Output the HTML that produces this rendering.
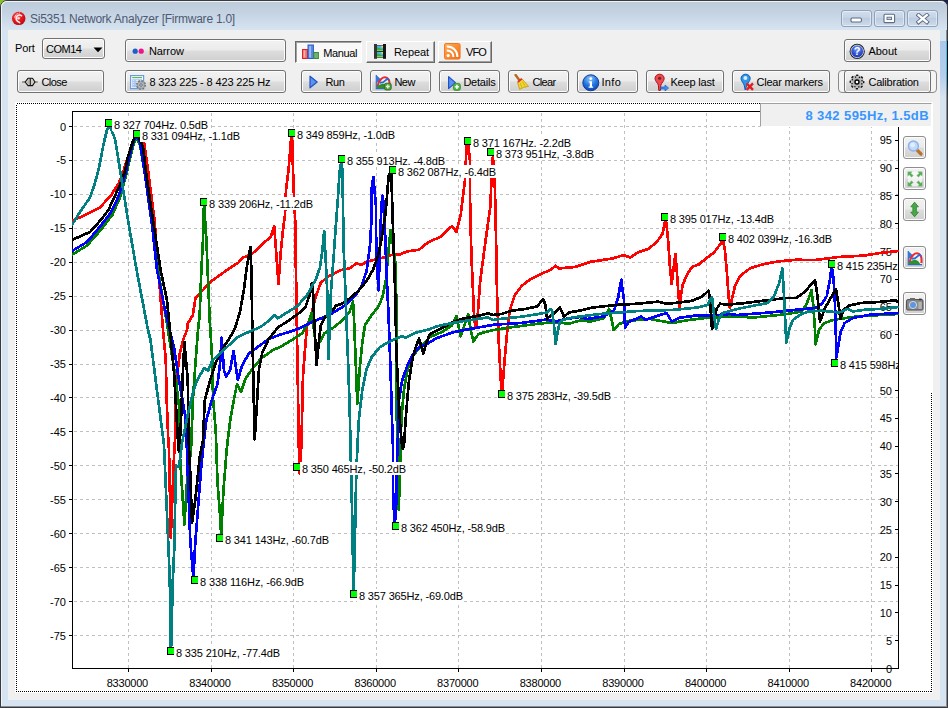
<!DOCTYPE html><html><head><meta charset="utf-8"><title>Si5351 Network Analyzer</title><style>
html,body{margin:0;padding:0}
body{width:948px;height:708px;overflow:hidden;position:relative;background:#2e2e2e;font-family:"Liberation Sans",sans-serif;font-size:11px;color:#000}
.abs{position:absolute}
#frame{left:0;top:0;width:946px;height:706px;border:1px solid #3a3a3a;border-radius:7px 7px 1px 1px;background:#d6e3f1;overflow:hidden;box-shadow:inset -1px -1px 0 #8a8d92}
#frame .hl{left:0;top:0;width:943px;height:703px;border:1px solid #eef4fb;border-right-color:transparent;border-bottom-color:transparent;border-radius:6px 6px 0 0}
#tbar{left:0;top:0;width:946px;height:29px;background:linear-gradient(#bccbdb 0,#c4d2e1 40%,#d7e4f2 100%)}
#title{left:30px;top:12px;font-size:12px;line-height:14px;color:#4e5a73;white-space:nowrap;letter-spacing:-0.24px}
#client{left:8px;top:30px;width:932px;height:670px;background:#f0f0f0}
.cap{top:10px;height:15px;width:29px;border:1px solid #8fa2bd;border-radius:3px;background:linear-gradient(#d3deec,#c3d2e4 50%,#bccbe0 50%,#cfdbea);box-shadow:inset 0 0 0 1px rgba(255,255,255,.45)}
.btn{box-sizing:border-box;height:23px;border:1px solid #707070;border-radius:3px;background:linear-gradient(#f2f2f2 0,#ebebeb 48%,#dddddd 52%,#cfcfcf 100%);box-shadow:inset 0 0 0 1px #fcfcfc;white-space:nowrap}
.btn span,.tb span{position:absolute;top:5px;line-height:13px}
.tb{box-sizing:border-box;height:22px;white-space:nowrap}
.tb.up{border:1px solid;border-color:#fff #696969 #696969 #fff;box-shadow:inset -1px -1px 0 #a0a0a0;background:#f0f0f0}
.tb.down{border:1px solid;border-color:#696969 #fff #fff #696969;box-shadow:inset 1px 1px 0 #a0a0a0;background:#f8f8f8}
#panel{left:15px;top:102px;width:918px;height:591px;background:#fff}
.chart{position:absolute;left:0;top:0}
#info{left:760px;top:103px;width:170px;height:22px;border:1px solid;border-color:#a0a0a0 #fff #fff #a0a0a0;background:#f0f0f0}
#info span{position:absolute;right:2px;top:4px;font-weight:bold;font-size:13px;line-height:15px;color:#3796ff;white-space:nowrap;letter-spacing:.4px}
.sb{box-sizing:border-box;left:903px;width:23px;height:23px;border:1px solid #8e8e8e;border-radius:3px;background:linear-gradient(#f2f2f2 0,#ebebeb 48%,#dddddd 52%,#cfcfcf 100%);box-shadow:inset 0 0 0 1px #fcfcfc}
</style></head><body>
<div class="abs" style="left:0;top:0;width:8px;height:8px;background:#86c425"></div><div class="abs" style="left:940px;top:0;width:8px;height:8px;background:#1c2048"></div>
<div id="frame" class="abs"><div id="tbar" class="abs"></div><div class="hl abs"></div></div>
<div id="title" class="abs">Si5351 Network Analyzer [Firmware 1.0]</div>
<svg class="abs" style="left:10px;top:10px" width="18" height="18" viewBox="0 0 18 18"><defs><radialGradient id="ri" cx="40%" cy="35%" r="70%"><stop offset="0" stop-color="#ff6a6a"/><stop offset=".5" stop-color="#e8181c"/><stop offset="1" stop-color="#b00c10"/></radialGradient></defs><circle cx="8.7" cy="8.4" r="7.2" fill="#c8ccd4" opacity=".7"/><circle cx="8.7" cy="8.4" r="6.7" fill="url(#ri)"/><path d="M9.6 12.6C6.4 11.4 5.2 8.6 6.8 6.4 8 4.8 10.4 4.6 11.6 5.8" fill="none" stroke="#fff" stroke-width="1.6" stroke-linecap="round" opacity=".9"/><path d="M4.6 7.6L5.6 5.2M6.4 4.4L7.6 3.2M8.8 3.2L9.8 2.8" stroke="#fff" stroke-width="1" opacity=".85"/><circle cx="8.6" cy="8.2" r="1.3" fill="#fff" opacity=".85"/></svg>
<div class="cap abs" style="left:841px"><svg class="abs" style="left:8px;top:6px" width="13" height="7"><rect x="1" y="1" width="10.4" height="4" rx="1.2" fill="#fff" stroke="#5d6c86" stroke-width="1.1"/></svg></div>
<div class="cap abs" style="left:874px"><svg class="abs" style="left:8px;top:2px" width="14" height="12"><rect x="1" y="1.2" width="10.6" height="8.4" rx="1.2" fill="#fff" stroke="#5d6c86" stroke-width="1.1"/><rect x="4" y="4.2" width="4.6" height="2.4" fill="#c8d4e6" stroke="#5d6c86" stroke-width=".9"/></svg></div>
<div class="cap abs" style="left:907px"><svg class="abs" style="left:8px;top:2px" width="14" height="12"><path d="M2.6 2.2L10.8 9M10.8 2.2L2.6 9" stroke="#5d6c86" stroke-width="4.2" stroke-linecap="square"/><path d="M2.6 2.2L10.8 9M10.8 2.2L2.6 9" stroke="#fff" stroke-width="2.3" stroke-linecap="square"/></svg></div>
<div class="abs" style="left:940px;top:41px;width:6px;height:56px;background:linear-gradient(#aac7ea,#b4cdec 60%,#d6e3f1)"></div><div class="abs" style="left:946px;top:41px;width:2px;height:56px;background:linear-gradient(90deg,#30c0e8 0,#30c0e8 40%,#000 50%);-webkit-mask-image:linear-gradient(#000 50%,transparent)"></div>
<div id="client" class="abs"></div>
<div class="abs" style="left:15px;top:42px;line-height:13px;letter-spacing:-0.1px">Port</div>
<div class="btn abs" style="left:42px;top:38px;width:63px;height:21px"><span style="left:3px;top:4px;letter-spacing:-0.48px">COM14</span><svg class="abs" style="left:50px;top:8px" width="10" height="6"><path d="M.5 .5H9.5L5 5.2Z" fill="#000"/></svg></div>
<div class="btn abs" style="left:125px;top:39px;width:161px"><svg class="abs" style="left:5px;top:7px" width="16" height="8"><circle cx="4.2" cy="4.2" r="2.6" fill="#1c5fc8"/><circle cx="10.2" cy="4.2" r="2.6" fill="#f0148c"/></svg><span style="left:23px;letter-spacing:-0.12px">Narrow</span></div>
<div class="tb down abs" style="left:295px;top:41px;width:67px"><svg class="abs" style="left:6px;top:2px" width="17" height="16"><rect x=".5" y="5.5" width="5" height="9" fill="#f26d6d" stroke="#d22"/><rect x="6" y="1" width="5.4" height="13.5" fill="#5a8be6" stroke="#2a5cc8"/><rect x="11.8" y="8.5" width="4.6" height="6" fill="#6fb36f" stroke="#3a8a3a"/><rect x="1.6" y="6.5" width="1.6" height="7" fill="#ffb0b0"/><rect x="7.2" y="2" width="1.8" height="11.5" fill="#9dbcf5"/></svg><span style="left:27.2px;top:5px;letter-spacing:-0.35px">Manual</span></div>
<div class="tb up abs" style="left:366px;top:41px;width:69px"><svg class="abs" style="left:7px;top:2px" width="13" height="16"><rect x="0" y="0" width="3" height="14.8" fill="#353535"/><rect x="9" y="0" width="3" height="14.8" fill="#151515"/><rect x="3" y="1.2" width="6" height="12.6" fill="#3a332c"/><rect x="3" y="1.9" width="6" height="5.1" fill="#4ab0f0"/><path d="M3 3.2L9 5.6V7H3Z" fill="#30b038"/><rect x="3" y="5.9" width="6" height="1.1" fill="#70dc48"/><rect x="7.4" y="1.9" width="1.6" height="1.7" fill="#f4dc50"/><rect x="3" y="8" width="6" height="5.1" fill="#4ab0f0"/><path d="M3 9.3L9 11.7V13.1H3Z" fill="#30b038"/><rect x="3" y="12" width="6" height="1.1" fill="#70dc48"/><rect x="7.4" y="8" width="1.6" height="1.7" fill="#f4dc50"/></svg><span style="left:27px;top:4px;letter-spacing:-0.08px">Repeat</span></div>
<div class="tb up abs" style="left:438px;top:41px;width:54px"><svg class="abs" style="left:5px;top:1px" width="17" height="17"><defs><linearGradient id="rs" x1="0" y1="0" x2="1" y2="1"><stop offset="0" stop-color="#ffb05c"/><stop offset="1" stop-color="#f26a10"/></linearGradient></defs><rect x=".5" y=".5" width="15.6" height="15.6" rx="1.5" fill="url(#rs)" stroke="#f47a20"/><circle cx="4.2" cy="12.6" r="1.6" fill="#fff"/><path d="M2.8 7.4A6.2 6.2 0 0 1 9.4 14" fill="none" stroke="#fff" stroke-width="2"/><path d="M2.8 3.4A10.2 10.2 0 0 1 13.4 14" fill="none" stroke="#fff" stroke-width="2"/></svg><span style="left:27px;top:4px;letter-spacing:-0.95px">VFO</span></div>
<div class="btn abs" style="left:844px;top:39px;width:87px"><svg class="abs" style="left:4px;top:3px" width="17" height="17"><defs><radialGradient id="qb" cx="50%" cy="30%" r="75%"><stop offset="0" stop-color="#7f9ff0"/><stop offset=".6" stop-color="#2a50d0"/><stop offset="1" stop-color="#1834a0"/></radialGradient></defs><circle cx="8.2" cy="8.4" r="7.6" fill="#1a1a1a"/><circle cx="8.2" cy="8.4" r="6.3" fill="url(#qb)" stroke="#dfe6f8" stroke-width=".8"/><text x="8.2" y="12.4" text-anchor="middle" font-family="'Liberation Sans',sans-serif" font-weight="bold" font-size="11px" fill="#fff">?</text></svg><span style="left:23.4px">About</span></div>
<div class="btn abs" style="left:17px;top:70px;width:87px"><svg class="abs" style="left:4px;top:6px" width="18" height="10"><path d="M0 5H3.4M12.8 5H15.8" stroke="#85857c" stroke-width="1.4"/><path d="M3.1 5L6 1.3H10.5L13 5 10.5 8.6H6Z" fill="#d2cec6" stroke="#111" stroke-width="1.1" stroke-linejoin="round"/><path d="M5 5L6.6 2.6H7.4V7.6H6.6Z" fill="#b8b4ac"/><path d="M8.3 1.3V8.6" stroke="#1a1a1a" stroke-width="1.1"/></svg><span style="left:23.4px;letter-spacing:-0.54px">Close</span></div>
<div class="btn abs" style="left:125px;top:70px;width:161px"><svg class="abs" style="left:4px;top:4px" width="18" height="16"><rect x=".6" y=".6" width="13" height="13" fill="#fff" stroke="#6a9be0" stroke-width="1.2"/><rect x="2.2" y="2" width="9.8" height="1.2" fill="#5cb85c"/><rect x="2.2" y="4.2" width="9.8" height="8.2" fill="#a8c4ee"/><path d="M3.2 5.6H11M3.2 7.6H11M3.2 9.6H8" stroke="#e8f0fc" stroke-width="1" stroke-dasharray="1 1.6 3 1.6"/><circle cx="11" cy="10" r="4.3" fill="#a4a4a4"/><circle cx="11" cy="10" r="4.3" fill="none" stroke="#6e6e6e" stroke-width="1.3" stroke-dasharray="1.7 1.68"/><circle cx="11" cy="10" r="2.6" fill="#bdbdbd"/><circle cx="11" cy="10" r="1.4" fill="#8ec0f4" stroke="#666" stroke-width=".7"/></svg><span style="left:23.4px;letter-spacing:-0.13px">8 323 225 - 8 423 225 Hz</span></div>
<div class="btn abs" style="left:301px;top:70px;width:61px"><svg class="abs" style="left:7px;top:4px" width="10" height="14"><path d="M1 1.2L8.2 7 1 12.8Z" fill="#5b93ee" stroke="#1f52c8" stroke-width="1.2" stroke-linejoin="round"/></svg><span style="left:23.4px;letter-spacing:-0.40px">Run</span></div>
<div class="btn abs" style="left:370px;top:70px;width:61px"><svg class="abs" style="left:4px;top:3px" width="17" height="17"><rect x="1.4" y="1.4" width="13" height="13" fill="#fff" opacity=".55"/><path d="M1.3 1V14.6H9.5" fill="none" stroke="#2a6ad0" stroke-width="1.2"/><path d="M1.3 1L6.6 6 1.3 9Z" fill="#2f7ad8"/><path d="M2.6 12.4C3.6 6.2 8 1.8 12 3.9 14 5 14.8 8 14.4 9.6" fill="none" stroke="#f02830" stroke-width="2"/><path d="M4.6 8.8L8.2 8.2 12.4 4.8 14.4 6.4" fill="none" stroke="#2a6ad8" stroke-width="1.8"/><path d="M1.9 14.2V12.2L5 10.6 8 9.6 9.6 10.2V14.2Z" fill="#2f8f2f"/><rect x="9.4" y="9.2" width="6.8" height="6.8" rx="1.8" fill="#4f9e3c" stroke="#2a6a20" stroke-width=".9"/><path d="M12.8 10.6V14.6M10.8 12.6H14.8" stroke="#dcf2d4" stroke-width="1.5"/></svg><span style="left:23.4px;letter-spacing:-0.47px">New</span></div>
<div class="btn abs" style="left:439px;top:70px;width:61px"><svg class="abs" style="left:7px;top:4px" width="15" height="16"><path d="M1.6 1.6L8.4 7.6 1.6 13.6Z" fill="#5b93ee" stroke="#1f52c8" stroke-width="1.2" stroke-linejoin="round"/><rect x="6.4" y="8.4" width="7" height="7" rx="2" fill="#58b048" stroke="#2f8a2a" stroke-width=".8"/><path d="M9.9 9.8V14M7.8 11.9H12" stroke="#fff" stroke-width="1.4"/></svg><span style="left:23.4px;letter-spacing:-0.23px">Details</span></div>
<div class="btn abs" style="left:508px;top:70px;width:61px"><svg class="abs" style="left:5px;top:3px" width="16" height="17"><path d="M1.6 1L6.4 7.6" stroke="#b36a1c" stroke-width="2.4" stroke-linecap="round"/><path d="M3.6 8.4L8 4.8 14.6 12.4 9.6 13.4 5.6 15.4Z" fill="#f4d430" stroke="#b89a10" stroke-width=".8"/><path d="M3.8 8L7.8 4.8" stroke="#e03030" stroke-width="1.8"/><path d="M6.4 9L8 14M8.4 7.6L11.6 13" stroke="#c8a818" stroke-width=".7"/></svg><span style="left:23.4px;letter-spacing:-0.60px">Clear</span></div>
<div class="btn abs" style="left:577px;top:70px;width:61px"><svg class="abs" style="left:4px;top:3px" width="18" height="18"><defs><radialGradient id="ib" cx="45%" cy="25%" r="80%"><stop offset="0" stop-color="#8ec4fa"/><stop offset=".55" stop-color="#1f74e0"/><stop offset="1" stop-color="#0a3fa8"/></radialGradient></defs><circle cx="8.8" cy="8.8" r="8" fill="url(#ib)" stroke="#123c9a" stroke-width="1"/><circle cx="8.8" cy="4.6" r="1.4" fill="#fff"/><path d="M6.8 7.2H10V12.6H11.2V13.8H6.6V12.6H7.8V8.4H6.8Z" fill="#fff"/></svg><span style="left:23.4px;letter-spacing:0.35px">Info</span></div>
<div class="btn abs" style="left:646px;top:70px;width:78px"><svg class="abs" style="left:6px;top:2px" width="18" height="19"><path d="M6.6 1.2C3.8 1.2 2 3.2 2 5.6 2 8 4.6 9.8 5.4 12.2L5.8 17.4H7.4L7.8 12.2C8.6 9.8 11.2 8 11.2 5.6 11.2 3.2 9.4 1.2 6.6 1.2Z" fill="#f0484c" stroke="#a81418" stroke-width="1"/><circle cx="6.6" cy="5.2" r="1.5" fill="#5a2a2a"/><path d="M7.6 14H12V12L15.6 15 12 18V16H7.6Z" fill="#3d8ff0" stroke="#1c5ac0" stroke-width=".7"/></svg><span style="left:23.4px;letter-spacing:-0.18px">Keep last</span></div>
<div class="btn abs" style="left:732px;top:70px;width:98px"><svg class="abs" style="left:6px;top:2px" width="18" height="19"><path d="M6.6 1.2C3.8 1.2 2 3.2 2 5.6 2 8 4.4 9.8 5.2 12.2L6.2 17 7.8 12.2C8.6 9.8 11.2 8 11.2 5.6 11.2 3.2 9.4 1.2 6.6 1.2Z" fill="#2f95ea" stroke="#0e5cb0" stroke-width="1"/><circle cx="6.4" cy="5" r="2" fill="#d8ecff"/><path d="M7.6 10.4L14 16.8M14 10.4L7.6 16.8" stroke="#e41c24" stroke-width="2.4"/></svg><span style="left:23.4px;letter-spacing:-0.20px">Clear markers</span></div>
<div class="abs" style="left:838px;top:70px;width:97px;height:21px;border:1px solid #8a8a8a;border-radius:4px;background:#f4f4f4"></div>
<div class="btn abs" style="left:844px;top:70px;width:87px"><svg class="abs" style="left:4px;top:3px" width="18" height="18"><g transform="translate(8 8)"><circle r="6.9" fill="#c2c2c2"/><circle r="4.6" fill="#b0b0b0"/><circle r="6.7" fill="none" stroke="#111" stroke-width="1.4" stroke-dasharray="2.3 2.96" stroke-dashoffset="1.1"/><circle r="5.2" fill="none" stroke="#111" stroke-width="1.3" stroke-dasharray="1.3 2.78" stroke-dashoffset="-1.3"/><circle r="2" fill="#fff" stroke="#000" stroke-width="1.4"/></g></svg><span style="left:23.4px;letter-spacing:-0.20px">Calibration</span></div>
<div id="panel" class="abs"><svg class="abs" style="left:0;top:0" width="918" height="591"><rect x="1.5" y="1.5" width="915" height="588" fill="none" stroke="#000" stroke-width="1" stroke-dasharray="1 1" shape-rendering="crispEdges"/></svg></div>
<div class="abs" style="left:899px;top:126px;width:34px;height:266px;background:#fff"></div>
<svg class="chart" width="948" height="708" viewBox="0 0 948 708" font-family="'Liberation Sans', sans-serif" font-size="11px">
<defs><clipPath id="pc"><rect x="72" y="111" width="827" height="557"/></clipPath></defs>
<g stroke="#c0c0c0" stroke-width="1" stroke-dasharray="3 3" shape-rendering="crispEdges" fill="none">
<path d="M74 126.5H898"/>
<path d="M74 160.5H898"/>
<path d="M74 194.5H898"/>
<path d="M74 228.5H898"/>
<path d="M74 262.5H898"/>
<path d="M74 296.5H898"/>
<path d="M74 330.5H898"/>
<path d="M74 364.5H898"/>
<path d="M74 397.5H898"/>
<path d="M74 431.5H898"/>
<path d="M74 465.5H898"/>
<path d="M74 499.5H898"/>
<path d="M74 533.5H898"/>
<path d="M74 567.5H898"/>
<path d="M74 601.5H898"/>
<path d="M74 635.5H898"/>
<path d="M128.5 113V668"/>
<path d="M211.5 113V668"/>
<path d="M293.5 113V668"/>
<path d="M376.5 113V668"/>
<path d="M458.5 113V668"/>
<path d="M541.5 113V668"/>
<path d="M624.5 113V668"/>
<path d="M706.5 113V668"/>
<path d="M789.5 113V668"/>
<path d="M871.5 113V668"/>
</g>
<g stroke="#000" stroke-width="1" shape-rendering="crispEdges" fill="none">
<path d="M72.5 111V668.5H898.5V127"/>
<path d="M72 111.5H760"/>
<path d="M69 126.5H72"/>
<path d="M69 160.5H72"/>
<path d="M69 194.5H72"/>
<path d="M69 228.5H72"/>
<path d="M69 262.5H72"/>
<path d="M69 296.5H72"/>
<path d="M69 330.5H72"/>
<path d="M69 364.5H72"/>
<path d="M69 397.5H72"/>
<path d="M69 431.5H72"/>
<path d="M69 465.5H72"/>
<path d="M69 499.5H72"/>
<path d="M69 533.5H72"/>
<path d="M69 567.5H72"/>
<path d="M69 601.5H72"/>
<path d="M69 635.5H72"/>
<path d="M128.5 668V672"/>
<path d="M211.5 668V672"/>
<path d="M293.5 668V672"/>
<path d="M376.5 668V672"/>
<path d="M458.5 668V672"/>
<path d="M541.5 668V672"/>
<path d="M624.5 668V672"/>
<path d="M706.5 668V672"/>
<path d="M789.5 668V672"/>
<path d="M871.5 668V672"/>
<path d="M895 668.5H898"/>
<path d="M895 640.5H898"/>
<path d="M895 612.5H898"/>
<path d="M895 585.5H898"/>
<path d="M895 557.5H898"/>
<path d="M895 529.5H898"/>
<path d="M895 501.5H898"/>
<path d="M895 473.5H898"/>
<path d="M895 446.5H898"/>
<path d="M895 418.5H898"/>
<path d="M895 390.5H898"/>
<path d="M895 362.5H898"/>
<path d="M895 334.5H898"/>
<path d="M895 307.5H898"/>
<path d="M895 279.5H898"/>
<path d="M895 251.5H898"/>
<path d="M895 223.5H898"/>
<path d="M895 195.5H898"/>
<path d="M895 168.5H898"/>
<path d="M895 140.5H898"/>
</g>
<g fill="#000">
<text x="66" y="130.5" text-anchor="end">0</text>
<text x="66" y="164.4" text-anchor="end">-5</text>
<text x="66" y="198.4" text-anchor="end">-10</text>
<text x="66" y="232.3" text-anchor="end">-15</text>
<text x="66" y="266.2" text-anchor="end">-20</text>
<text x="66" y="300.2" text-anchor="end">-25</text>
<text x="66" y="334.1" text-anchor="end">-30</text>
<text x="66" y="368.0" text-anchor="end">-35</text>
<text x="66" y="402.0" text-anchor="end">-40</text>
<text x="66" y="435.9" text-anchor="end">-45</text>
<text x="66" y="469.8" text-anchor="end">-50</text>
<text x="66" y="503.8" text-anchor="end">-55</text>
<text x="66" y="537.7" text-anchor="end">-60</text>
<text x="66" y="571.6" text-anchor="end">-65</text>
<text x="66" y="605.6" text-anchor="end">-70</text>
<text x="66" y="639.5" text-anchor="end">-75</text>
<text x="106.7" y="687" textLength="41.5" lengthAdjust="spacing">8330000</text>
<text x="189.3" y="687" textLength="41.5" lengthAdjust="spacing">8340000</text>
<text x="271.9" y="687" textLength="41.5" lengthAdjust="spacing">8350000</text>
<text x="354.5" y="687" textLength="41.5" lengthAdjust="spacing">8360000</text>
<text x="437.1" y="687" textLength="41.5" lengthAdjust="spacing">8370000</text>
<text x="519.7" y="687" textLength="41.5" lengthAdjust="spacing">8380000</text>
<text x="602.3" y="687" textLength="41.5" lengthAdjust="spacing">8390000</text>
<text x="684.9" y="687" textLength="41.5" lengthAdjust="spacing">8400000</text>
<text x="767.5" y="687" textLength="41.5" lengthAdjust="spacing">8410000</text>
<text x="850.1" y="687" textLength="41.5" lengthAdjust="spacing">8420000</text>
<text x="892" y="672.5" text-anchor="end">0</text>
<text x="892" y="644.7" text-anchor="end">5</text>
<text x="892" y="616.9" text-anchor="end">10</text>
<text x="892" y="589.1" text-anchor="end">15</text>
<text x="892" y="561.3" text-anchor="end">20</text>
<text x="892" y="533.5" text-anchor="end">25</text>
<text x="892" y="505.7" text-anchor="end">30</text>
<text x="892" y="477.9" text-anchor="end">35</text>
<text x="892" y="450.1" text-anchor="end">40</text>
<text x="892" y="422.3" text-anchor="end">45</text>
<text x="892" y="394.5" text-anchor="end">50</text>
<text x="892" y="366.7" text-anchor="end">55</text>
<text x="892" y="338.9" text-anchor="end">60</text>
<text x="892" y="311.1" text-anchor="end">65</text>
<text x="892" y="283.3" text-anchor="end">70</text>
<text x="892" y="255.5" text-anchor="end">75</text>
<text x="892" y="227.7" text-anchor="end">80</text>
<text x="892" y="199.9" text-anchor="end">85</text>
<text x="892" y="172.1" text-anchor="end">90</text>
<text x="892" y="144.3" text-anchor="end">95</text>
</g>
<g fill="none" stroke-width="2.7" stroke-linejoin="round" stroke-linecap="round" shape-rendering="crispEdges" clip-path="url(#pc)">
<polyline stroke="#ff0000" points="72.0,221.0 84.4,215.2 100.0,207.4 111.0,195.4 119.0,182.7 122.5,174.0 128.0,157.0 131.0,147.0 134.0,139.0 137.0,135.5 139.0,136.0 144.2,143.0 148.5,174.0 154.6,220.8 159.0,277.6 163.0,330.0 165.8,360.5 166.6,397.8 168.3,440.0 169.0,450.0 170.8,537.5 174.0,457.0 175.0,440.0 175.0,394.0 178.5,364.0 180.0,352.0 183.6,338.5 187.0,330.0 187.8,323.4 192.9,315.0 195.4,298.0 211.5,281.0 228.5,269.0 238.6,262.4 242.0,258.0 252.0,254.0 265.8,241.0 270.8,237.0 274.2,226.0 276.0,250.0 278.5,283.6 280.5,255.0 282.7,232.0 285.0,215.0 286.0,190.0 288.6,169.4 291.2,137.0 292.0,134.0 293.0,169.4 293.7,190.0 295.4,225.0 295.4,245.5 296.3,288.0 297.0,335.0 298.0,392.8 298.8,445.0 299.7,474.0 301.4,445.0 303.0,375.8 305.6,342.0 307.3,325.0 310.7,316.7 315.8,296.4 320.8,282.8 327.6,276.9 341.0,270.0 349.7,268.4 356.4,263.3 361.5,265.0 366.6,261.6 378.5,259.0 392.0,254.8 398.8,254.8 407.3,251.4 419.0,249.7 428.5,242.0 440.3,237.0 452.0,226.0 456.4,232.0 460.7,215.0 465.0,179.6 466.6,145.7 468.0,142.0 470.0,161.0 470.0,193.0 470.5,225.0 471.7,262.5 473.4,299.7 474.2,320.0 476.0,327.0 477.6,316.7 480.0,282.8 484.4,249.0 487.8,225.0 490.3,206.7 491.5,179.6 492.9,155.8 494.6,179.6 495.4,206.7 496.3,252.3 497.0,293.0 498.8,342.4 501.4,391.5 502.0,394.0 504.7,359.0 507.3,330.5 509.8,310.0 515.0,294.7 521.7,286.0 530.0,279.4 542.0,273.5 550.5,270.0 555.6,265.8 559.0,268.4 575.0,267.0 590.3,261.9 612.4,258.5 624.2,255.0 630.0,257.6 637.8,252.5 648.0,249.0 656.4,242.4 662.4,234.0 665.0,222.0 666.3,222.0 668.3,242.4 670.0,267.8 671.7,284.0 673.7,267.8 675.4,254.0 676.8,271.0 678.5,295.0 679.8,308.5 681.0,295.0 682.7,284.7 687.0,274.6 692.0,267.0 698.8,264.4 707.3,257.6 714.0,252.5 719.0,245.8 723.0,240.0 725.0,250.8 726.8,271.0 728.5,295.0 729.8,308.0 732.7,296.0 735.0,286.0 740.0,276.0 750.5,268.0 764.0,264.0 777.6,261.5 796.0,259.8 815.0,260.0 838.6,257.0 864.0,255.6 880.0,253.0 898.0,251.0"/>
<polyline stroke="#008000" points="72.0,254.7 87.0,245.6 101.3,229.3 112.6,214.5 119.7,198.0 126.7,172.8 130.0,158.0 133.0,146.0 136.0,137.0 140.0,145.0 145.0,175.0 152.0,225.0 158.0,270.0 168.0,330.0 176.0,381.0 179.0,406.0 180.0,457.0 184.4,524.7 187.0,482.0 191.0,450.0 193.0,398.0 195.4,364.0 198.0,330.0 199.7,315.0 201.4,269.0 203.0,240.0 204.0,203.0 206.4,240.0 207.8,274.0 209.8,321.7 210.7,335.0 212.4,364.0 213.0,398.0 215.8,431.7 217.5,482.4 220.8,524.7 221.0,540.0 223.4,490.8 226.8,448.5 230.0,421.5 233.6,401.0 237.0,384.0 241.0,392.0 245.4,379.0 252.2,369.0 260.7,358.8 272.5,350.3 280.0,347.0 292.0,340.0 302.0,333.5 309.0,321.8 311.5,312.5 314.0,330.0 316.0,345.0 320.0,342.0 324.2,333.5 334.4,326.9 342.9,320.0 349.7,311.6 353.0,301.4 353.9,316.7 355.6,359.0 357.3,403.8 359.8,367.4 362.4,342.0 365.0,325.0 371.7,315.0 378.5,306.5 382.7,296.4 386.0,279.4 388.6,249.0 390.7,230.0 393.0,245.0 395.4,262.5 396.3,299.7 396.3,392.8 397.0,426.7 398.8,509.6 400.5,452.0 401.4,418.0 404.0,389.4 407.3,370.8 412.0,357.0 419.0,348.5 423.4,344.0 430.0,337.0 442.0,332.0 452.0,325.4 456.4,316.0 460.7,336.4 465.0,323.7 468.3,314.4 470.8,330.5 473.4,341.5 478.5,334.0 491.0,330.5 513.0,327.0 538.6,323.7 554.0,322.0 569.0,323.7 580.0,320.5 590.0,321.5 604.0,318.0 609.0,308.8 611.5,319.0 613.7,330.0 619.0,324.0 629.3,320.7 650.0,319.0 671.7,323.0 688.6,320.0 705.6,318.0 730.0,316.4 754.0,317.5 787.8,314.0 801.4,311.5 806.4,304.7 811.5,290.3 813.2,304.7 815.0,330.0 815.6,344.4 819.0,330.0 823.4,324.0 830.0,320.8 838.6,319.0 855.6,316.6 880.0,315.0 898.0,314.0"/>
<polyline stroke="#0000ff" points="72.0,251.0 87.0,242.0 101.3,225.0 111.0,212.4 118.3,196.8 122.5,184.0 126.0,171.4 129.0,158.0 132.0,146.0 135.0,137.0 136.0,135.0 140.0,142.0 144.3,170.0 151.5,220.0 157.0,270.0 165.0,310.0 172.0,340.0 174.0,347.0 178.5,377.0 185.0,415.0 187.0,450.0 187.8,474.0 190.3,541.7 193.2,576.0 194.0,580.0 194.2,560.0 195.3,543.0 198.0,507.8 201.4,465.4 204.0,440.0 206.4,420.0 211.5,401.0 217.5,384.0 220.0,364.0 221.7,337.6 224.0,370.7 226.0,376.6 230.0,370.7 233.6,351.0 237.8,380.0 242.0,365.6 248.8,353.7 259.0,346.0 269.0,339.0 279.0,335.0 295.4,330.0 312.4,321.8 329.3,315.0 346.3,304.8 354.7,296.4 361.5,286.0 366.6,271.0 370.0,245.5 371.7,215.0 371.7,188.0 373.4,177.0 376.0,206.7 376.0,232.0 377.0,265.8 378.5,290.4 380.0,249.0 381.0,215.0 382.2,195.7 384.4,206.7 385.3,240.4 387.0,282.8 388.6,316.7 389.5,342.0 390.7,375.8 391.7,409.7 392.9,445.0 392.9,485.8 394.6,529.0 396.3,502.8 397.0,460.4 398.0,435.0 398.8,401.0 402.0,381.0 407.3,365.7 412.4,355.5 419.0,347.0 426.8,344.0 437.0,338.0 454.0,332.0 470.8,328.8 494.6,324.6 521.7,322.9 547.0,319.5 555.6,321.8 564.0,319.2 580.0,317.0 587.0,319.0 604.0,316.4 614.0,310.5 618.3,297.0 621.2,279.7 624.0,300.3 625.0,327.5 628.5,322.4 641.0,316.4 645.4,319.8 658.0,315.6 666.6,313.0 671.7,321.5 678.5,318.0 695.4,315.6 710.7,315.6 730.0,314.0 737.0,315.0 770.8,312.4 796.0,309.8 815.0,308.0 821.7,304.0 826.8,296.0 830.0,279.3 831.7,266.0 833.6,279.3 835.0,304.7 836.0,340.0 836.3,358.0 838.0,347.8 840.5,332.5 844.7,323.0 853.0,318.0 870.0,314.7 898.0,313.0"/>
<polyline stroke="#000000" points="72.0,240.0 80.0,236.4 90.0,232.0 101.3,219.4 108.4,210.0 112.6,201.0 119.7,185.5 124.6,172.8 128.0,156.7 132.0,144.0 135.0,136.0 137.0,135.0 140.0,140.0 143.0,146.7 145.8,170.0 150.0,200.0 153.0,220.0 160.6,270.0 167.0,300.0 170.0,330.0 174.0,372.0 178.5,450.0 179.3,452.0 181.0,420.0 183.0,370.0 184.4,342.0 186.0,360.0 187.8,381.0 188.6,440.0 190.3,474.0 192.0,523.0 195.4,499.0 199.7,457.0 203.0,440.0 204.7,401.0 209.8,381.0 216.6,360.5 225.0,345.0 228.5,340.0 235.0,328.5 240.0,311.5 243.7,291.0 247.0,265.8 250.5,247.0 251.4,270.8 252.2,321.7 253.0,364.0 254.7,439.3 257.3,397.8 259.0,369.0 262.4,352.0 269.0,338.5 276.0,330.0 278.5,326.9 287.0,321.8 298.8,313.3 305.6,306.5 309.8,294.7 312.0,282.8 313.2,294.7 314.4,325.0 316.6,364.8 319.2,338.6 320.8,325.0 324.2,318.4 332.7,310.0 336.0,305.7 341.2,304.0 348.0,299.7 358.0,291.3 366.6,281.0 373.4,269.0 378.5,254.0 381.9,237.0 385.3,215.0 387.0,196.5 388.6,176.0 391.0,171.0 391.7,186.0 392.4,210.0 393.7,249.0 395.4,299.7 396.3,350.4 398.0,384.3 400.3,426.7 402.0,445.0 402.8,449.0 404.2,443.0 405.6,420.0 406.4,409.7 409.0,381.0 412.4,359.0 415.8,347.0 419.0,338.6 423.4,353.4 426.8,341.5 430.0,334.0 442.0,328.0 454.0,321.5 464.0,318.4 477.6,315.8 488.6,313.3 492.9,315.0 501.4,314.0 511.5,310.8 525.0,309.0 537.0,306.5 543.2,299.0 545.4,304.8 547.0,318.4 554.0,313.3 559.8,307.4 564.0,316.7 569.0,312.5 580.0,310.5 592.0,307.6 615.8,305.0 637.8,303.7 658.0,301.7 666.6,303.7 680.0,302.5 692.0,300.8 702.0,296.6 708.6,290.7 709.8,298.3 710.7,310.0 712.0,329.0 714.0,322.0 716.6,308.8 720.0,303.7 726.8,304.7 745.4,303.0 770.8,299.7 787.8,298.0 796.0,298.0 804.7,292.0 809.8,286.0 815.0,280.0 817.5,296.0 820.0,321.7 825.0,308.0 831.9,296.0 836.0,289.5 838.6,304.7 840.3,319.0 843.7,309.8 848.8,305.6 860.7,303.0 878.6,302.0 895.6,300.3 898.0,302.0"/>
<polyline stroke="#008080" points="72.0,225.0 80.0,212.0 90.0,197.5 94.0,186.0 98.5,170.0 104.0,142.0 107.0,130.0 109.0,125.0 111.0,129.0 115.0,139.0 118.0,157.0 121.0,176.0 126.7,212.0 128.5,223.0 136.6,270.0 148.0,330.0 150.5,340.0 164.0,445.0 169.0,560.0 170.0,590.7 170.8,647.5 171.0,651.0 171.7,628.0 172.6,585.0 174.2,550.0 176.0,465.4 179.0,467.0 182.0,443.0 187.8,414.7 192.9,392.7 196.3,382.5 203.9,368.0 208.0,370.7 212.4,360.5 221.7,352.0 237.0,337.6 248.8,331.9 260.7,326.8 267.5,321.7 274.2,315.0 277.6,318.4 287.0,312.5 297.0,306.5 307.3,294.7 315.8,279.4 320.0,267.5 322.5,249.0 324.2,231.0 326.0,265.8 327.6,299.7 328.5,359.0 329.7,325.0 331.0,291.0 333.6,257.4 336.0,223.5 337.8,200.0 339.5,172.8 341.5,160.0 342.5,172.8 342.9,200.0 343.7,249.0 345.4,291.0 347.0,335.0 348.0,359.0 349.7,409.7 351.4,485.8 352.2,516.4 353.5,592.0 354.7,555.0 355.6,502.8 356.4,469.0 358.0,435.0 359.0,418.0 362.4,389.4 366.6,369.0 371.7,357.0 380.0,347.0 388.6,342.0 402.0,336.0 405.6,337.7 415.8,332.6 429.3,329.2 437.0,326.3 454.0,322.6 470.8,320.0 487.8,317.5 492.9,320.0 504.7,318.4 521.7,316.7 538.6,314.0 547.0,312.5 550.8,309.0 552.0,310.0 554.0,325.0 555.6,344.0 558.0,330.5 559.8,322.0 562.4,320.0 572.5,317.5 580.0,316.5 604.0,313.6 637.8,311.0 671.7,310.0 697.0,307.6 707.3,305.0 710.0,300.0 712.0,297.0 714.0,314.0 716.0,329.0 719.0,319.0 722.5,313.0 725.0,312.4 737.0,309.0 754.0,305.6 767.5,303.0 774.2,296.0 779.3,282.7 782.4,268.3 783.6,287.8 785.3,321.7 786.3,342.7 789.5,328.5 792.9,320.0 799.7,315.0 808.0,311.5 821.7,310.7 838.6,312.4 841.0,312.0 848.0,308.8 853.0,311.4 865.0,309.7 882.0,308.8 898.0,307.0"/>
</g>
<defs><clipPath id="pc2"><rect x="0" y="0" width="898" height="708"/></clipPath></defs>
<g clip-path="url(#pc2)">
<rect x="105" y="119" width="8" height="8" fill="#000" shape-rendering="crispEdges"/><rect x="106" y="120" width="6" height="6" fill="#00ff00" shape-rendering="crispEdges"/>
<rect x="112" y="118" width="97" height="13" fill="#fff" shape-rendering="crispEdges"/>
<text x="114" y="129" textLength="94" lengthAdjust="spacing">8 327 704Hz, 0.5dB</text>
<rect x="133" y="130" width="8" height="8" fill="#000" shape-rendering="crispEdges"/><rect x="134" y="131" width="6" height="6" fill="#00ff00" shape-rendering="crispEdges"/>
<rect x="140" y="129" width="101" height="13" fill="#fff" shape-rendering="crispEdges"/>
<text x="142" y="140" textLength="98" lengthAdjust="spacing">8 331 094Hz, -1.1dB</text>
<rect x="200" y="198" width="8" height="8" fill="#000" shape-rendering="crispEdges"/><rect x="201" y="199" width="6" height="6" fill="#00ff00" shape-rendering="crispEdges"/>
<rect x="207" y="197" width="107" height="13" fill="#fff" shape-rendering="crispEdges"/>
<text x="209" y="208" textLength="104" lengthAdjust="spacing">8 339 206Hz, -11.2dB</text>
<rect x="288" y="129" width="8" height="8" fill="#000" shape-rendering="crispEdges"/><rect x="289" y="130" width="6" height="6" fill="#00ff00" shape-rendering="crispEdges"/>
<rect x="295" y="128" width="101" height="13" fill="#fff" shape-rendering="crispEdges"/>
<text x="297" y="139" textLength="98" lengthAdjust="spacing">8 349 859Hz, -1.0dB</text>
<rect x="338" y="155" width="8" height="8" fill="#000" shape-rendering="crispEdges"/><rect x="339" y="156" width="6" height="6" fill="#00ff00" shape-rendering="crispEdges"/>
<rect x="345" y="154" width="101" height="13" fill="#fff" shape-rendering="crispEdges"/>
<text x="347" y="165" textLength="98" lengthAdjust="spacing">8 355 913Hz, -4.8dB</text>
<rect x="389" y="166" width="8" height="8" fill="#000" shape-rendering="crispEdges"/><rect x="390" y="167" width="6" height="6" fill="#00ff00" shape-rendering="crispEdges"/>
<rect x="396" y="165" width="101" height="13" fill="#fff" shape-rendering="crispEdges"/>
<text x="398" y="176" textLength="98" lengthAdjust="spacing">8 362 087Hz, -6.4dB</text>
<rect x="464" y="137" width="8" height="8" fill="#000" shape-rendering="crispEdges"/><rect x="465" y="138" width="6" height="6" fill="#00ff00" shape-rendering="crispEdges"/>
<rect x="471" y="136" width="101" height="13" fill="#fff" shape-rendering="crispEdges"/>
<text x="473" y="147" textLength="98" lengthAdjust="spacing">8 371 167Hz, -2.2dB</text>
<rect x="487" y="148" width="8" height="8" fill="#000" shape-rendering="crispEdges"/><rect x="488" y="149" width="6" height="6" fill="#00ff00" shape-rendering="crispEdges"/>
<rect x="494" y="147" width="101" height="13" fill="#fff" shape-rendering="crispEdges"/>
<text x="496" y="158" textLength="98" lengthAdjust="spacing">8 373 951Hz, -3.8dB</text>
<rect x="661" y="213" width="8" height="8" fill="#000" shape-rendering="crispEdges"/><rect x="662" y="214" width="6" height="6" fill="#00ff00" shape-rendering="crispEdges"/>
<rect x="668" y="212" width="107" height="13" fill="#fff" shape-rendering="crispEdges"/>
<text x="670" y="223" textLength="104" lengthAdjust="spacing">8 395 017Hz, -13.4dB</text>
<rect x="719" y="233" width="8" height="8" fill="#000" shape-rendering="crispEdges"/><rect x="720" y="234" width="6" height="6" fill="#00ff00" shape-rendering="crispEdges"/>
<rect x="726" y="232" width="107" height="13" fill="#fff" shape-rendering="crispEdges"/>
<text x="728" y="243" textLength="104" lengthAdjust="spacing">8 402 039Hz, -16.3dB</text>
<rect x="828" y="260" width="8" height="8" fill="#000" shape-rendering="crispEdges"/><rect x="829" y="261" width="6" height="6" fill="#00ff00" shape-rendering="crispEdges"/>
<rect x="835" y="259" width="107" height="13" fill="#fff" shape-rendering="crispEdges"/>
<text x="837" y="270" textLength="104" lengthAdjust="spacing">8 415 235Hz, -20.3dB</text>
<rect x="831" y="359" width="8" height="8" fill="#000" shape-rendering="crispEdges"/><rect x="832" y="360" width="6" height="6" fill="#00ff00" shape-rendering="crispEdges"/>
<rect x="838" y="358" width="107" height="13" fill="#fff" shape-rendering="crispEdges"/>
<text x="840" y="369" textLength="104" lengthAdjust="spacing">8 415 598Hz, -34.9dB</text>
<rect x="498" y="390" width="8" height="8" fill="#000" shape-rendering="crispEdges"/><rect x="499" y="391" width="6" height="6" fill="#00ff00" shape-rendering="crispEdges"/>
<rect x="505" y="389" width="107" height="13" fill="#fff" shape-rendering="crispEdges"/>
<text x="507" y="400" textLength="104" lengthAdjust="spacing">8 375 283Hz, -39.5dB</text>
<rect x="293" y="463" width="8" height="8" fill="#000" shape-rendering="crispEdges"/><rect x="294" y="464" width="6" height="6" fill="#00ff00" shape-rendering="crispEdges"/>
<rect x="300" y="462" width="107" height="13" fill="#fff" shape-rendering="crispEdges"/>
<text x="302" y="473" textLength="104" lengthAdjust="spacing">8 350 465Hz, -50.2dB</text>
<rect x="392" y="522" width="8" height="8" fill="#000" shape-rendering="crispEdges"/><rect x="393" y="523" width="6" height="6" fill="#00ff00" shape-rendering="crispEdges"/>
<rect x="399" y="521" width="107" height="13" fill="#fff" shape-rendering="crispEdges"/>
<text x="401" y="532" textLength="104" lengthAdjust="spacing">8 362 450Hz, -58.9dB</text>
<rect x="216" y="534" width="8" height="8" fill="#000" shape-rendering="crispEdges"/><rect x="217" y="535" width="6" height="6" fill="#00ff00" shape-rendering="crispEdges"/>
<rect x="223" y="533" width="107" height="13" fill="#fff" shape-rendering="crispEdges"/>
<text x="225" y="544" textLength="104" lengthAdjust="spacing">8 341 143Hz, -60.7dB</text>
<rect x="191" y="576" width="8" height="8" fill="#000" shape-rendering="crispEdges"/><rect x="192" y="577" width="6" height="6" fill="#00ff00" shape-rendering="crispEdges"/>
<rect x="198" y="575" width="107" height="13" fill="#fff" shape-rendering="crispEdges"/>
<text x="200" y="586" textLength="104" lengthAdjust="spacing">8 338 116Hz, -66.9dB</text>
<rect x="350" y="590" width="8" height="8" fill="#000" shape-rendering="crispEdges"/><rect x="351" y="591" width="6" height="6" fill="#00ff00" shape-rendering="crispEdges"/>
<rect x="357" y="589" width="107" height="13" fill="#fff" shape-rendering="crispEdges"/>
<text x="359" y="600" textLength="104" lengthAdjust="spacing">8 357 365Hz, -69.0dB</text>
<rect x="167" y="647" width="8" height="8" fill="#000" shape-rendering="crispEdges"/><rect x="168" y="648" width="6" height="6" fill="#00ff00" shape-rendering="crispEdges"/>
<rect x="174" y="646" width="107" height="13" fill="#fff" shape-rendering="crispEdges"/>
<text x="176" y="657" textLength="104" lengthAdjust="spacing">8 335 210Hz, -77.4dB</text>
</g>
</svg>
<div id="info" class="abs"><span>8 342 595Hz, 1.5dB</span></div>
<div class="sb abs" style="top:136px"><svg class="abs" style="left:2px;top:2px" width="18" height="18"><path d="M10.4 10.4L15 15" stroke="#b8722c" stroke-width="3.2" stroke-linecap="round"/><circle cx="7.4" cy="7" r="5" fill="#c2d9f8" stroke="#8db3ec" stroke-width="1.4"/><circle cx="6.6" cy="6" r="2.4" fill="#e8f2ff" opacity=".8"/></svg></div>
<div class="sb abs" style="top:167px"><svg class="abs" style="left:3px;top:3px" width="16" height="16"><rect x="1" y="1" width="14" height="14" fill="#fff" opacity=".6"/><g fill="#56aa56" stroke="#8cc88c" stroke-width=".5"><path d="M0.8 0.8L5.2 0.8L3.8 2.2L6.2 4.6L4.6 6.2L2.2 3.8L0.8 5.2Z"/><path d="M15.2 0.8L10.8 0.8L12.2 2.2L9.8 4.6L11.4 6.2L13.8 3.8L15.2 5.2Z"/><path d="M0.8 15.2L5.2 15.2L3.8 13.8L6.2 11.4L4.6 9.8L2.2 12.2L0.8 10.8Z"/><path d="M15.2 15.2L10.8 15.2L12.2 13.8L9.8 11.4L11.4 9.8L13.8 12.2L15.2 10.8Z"/></g></svg></div>
<div class="sb abs" style="top:198px"><svg class="abs" style="left:5px;top:2px" width="12" height="18"><path d="M5.6 1.2L9.4 5.8H7.3V11.2H9.4L5.6 15.8 1.8 11.2H3.9V5.8H1.8Z" fill="#4aa84a" stroke="#2f862f" stroke-width=".9" stroke-linejoin="round"/></svg></div>
<div class="sb abs" style="top:246px"><svg class="abs" style="left:3px;top:3px" width="17" height="17"><rect x="1.4" y="1.4" width="13.4" height="13" fill="#fff" opacity=".55"/><path d="M1.3 1V14.6H15" fill="none" stroke="#2a6ad0" stroke-width="1.2"/><path d="M1.3 1L6.6 6 1.3 9Z" fill="#2f7ad8"/><path d="M2.6 12.4C3.6 6.2 8 1.8 12 3.9 14 5 14.8 9 14.4 13" fill="none" stroke="#f02830" stroke-width="2"/><path d="M4.6 8.8L8.2 8.2 12.4 4.8 14.4 6.4" fill="none" stroke="#2a6ad8" stroke-width="1.8"/><path d="M1.9 14.2V12.2L5 10.6 8 9.6 11 11 13.4 14.2Z" fill="#2f8f2f"/></svg></div>
<div class="sb abs" style="top:292px"><svg class="abs" style="left:2px;top:4px" width="18" height="14"><rect x=".6" y="2.6" width="16.4" height="10.4" rx="1.2" fill="#8c8c8c" stroke="#4a4a4a" stroke-width="1"/><rect x="4" y="1" width="5" height="2.4" fill="#6a6a6a"/><rect x="13" y="1.6" width="2.6" height="1.6" fill="#333"/><circle cx="7" cy="8" r="3.6" fill="#5b97e6" stroke="#d8d8d8" stroke-width="1"/><rect x="12.4" y="5" width="3.4" height="7" fill="#b4b4b4"/></svg></div>
</body></html>
